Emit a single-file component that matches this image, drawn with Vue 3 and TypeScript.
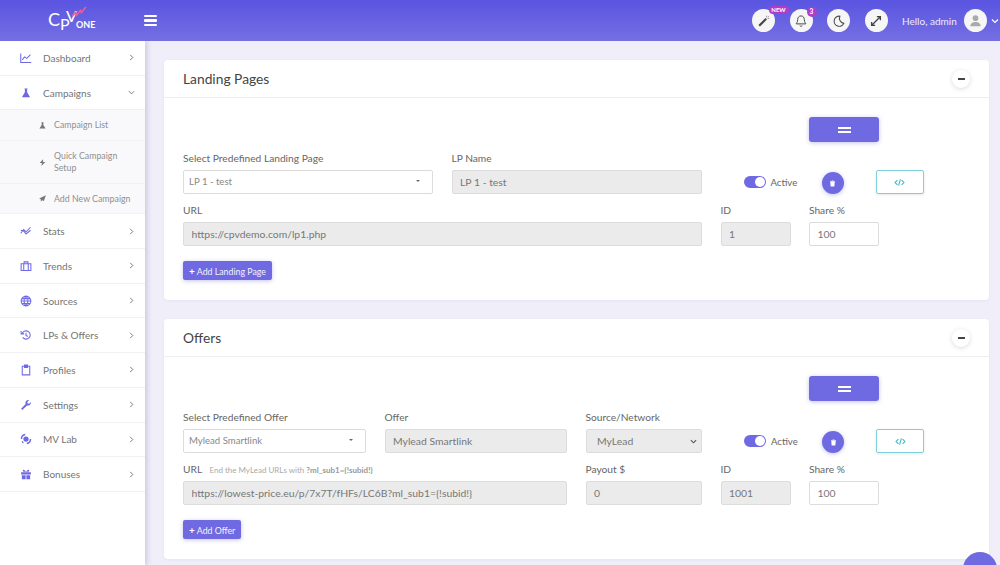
<script setup lang="ts">
interface NavItem {
  label: string;
  icon: string;
  solid?: boolean;
}

const topNav: NavItem[] = [{ label: 'Dashboard', icon: 'M1 2v12h14M3 10.500l3-4 3 2 5-5' }];

const lowerNav: NavItem[] = [
  { label: 'Stats', icon: 'M1 11l4-5 3 3 6-6M1 7l4 1 3 4 6-5' },
  { label: 'Trends', icon: 'M1.500 5h13v9h-13zM5 5v9M11 5v9M5.500 5V2.500h5V5' },
  { label: 'Sources', icon: 'M8 1.500a6.500 6.500 0 1 0 0 13 6.500 6.500 0 0 0 0-13zM1.500 8h13M8 1.500c-3.500 3.500-3.500 9.500 0 13M8 1.500c3.500 3.500 3.500 9.500 0 13M2.500 4.800h11M2.500 11.200h11' },
  { label: 'LPs & Offers', icon: 'M1.500 2.500v4h4M3 6a5.500 5.500 0 1 1 .5 5M8 5v3.500l2.500 1.500' },
  { label: 'Profiles', icon: 'M3 3h10v11.500H3zM6 1.500h4v3H6z' },
  { label: 'Settings', solid: true, icon: 'M1.500 13l6-6.500C6.500 4 8.500 1 12 1.500L9.800 4l.4 2 2 .4L14.500 4c.5 3.500-2.500 5.500-5 4.500L3 14.500z' },
  { label: 'MV Lab', solid: true, icon: 'M8 4.500a3.500 3.500 0 1 0 0 7 3.500 3.500 0 0 0 0-7zM1 8a7 7 0 0 1 6-7v2a5 5 0 0 0-4 5zM15 8a7 7 0 0 1-6 7v-2a5 5 0 0 0 4-5zM2 11.500l1.500-1 1.500 2L4 14z' },
  { label: 'Bonuses', solid: true, icon: 'M1.500 5.500h13v3h-13zM2.500 9.500h5V15h-5zM8.500 9.500h5V15h-5zM8 5C5 1 2.500 2 4.500 5zM8 5c3-4 5.500-3 3.500 0z' }
];
</script>

<template>
  <div class="page">
    <header class="topbar">
      <div class="logo">
        <span class="logo-letter logo-c">C</span>
        <span class="logo-letter logo-p">P</span>
        <span class="logo-letter logo-v">V</span>
        <svg class="logo-arrow" viewBox="0 0 16 12"><path d="M0 11l4-4 1 3 4-5 1 2 5-6" fill="none" stroke="#ec5c93" stroke-width="1.800" /></svg>
        <span class="logo-one">ONE</span>
      </div>
      <button class="burger" aria-label="Menu"><i></i><i></i><i></i></button>
      <div class="topbar-right">
        <span class="round-btn">
          <svg viewBox="0 0 16 16"><path d="M2.500 13.500l8-8" stroke="#444" stroke-width="2.400" fill="none" /><path d="M11 2v2M14 5h-2M13.500 2.500l-1 1" stroke="#888" stroke-width="1" fill="none" /></svg>
          <span class="badge badge-new">NEW</span>
        </span>
        <span class="round-btn">
          <svg viewBox="0 0 16 16"><path d="M8 2.200c-2.600 0-3.800 2-3.800 4.300 0 3-1.700 4.200-1.700 4.800h11c0-.6-1.700-1.800-1.700-4.800 0-2.300-1.200-4.300-3.800-4.300zM6.500 13.200c.4 1 2.600 1 3 0" fill="none" stroke="#444" stroke-width="1.100" /></svg>
          <span class="badge badge-count">3</span>
        </span>
        <span class="round-btn">
          <svg viewBox="0 0 16 16"><path d="M9 2.500a5.800 5.800 0 1 0 4.500 8.200A6 6 0 0 1 9 2.500z" fill="none" stroke="#444" stroke-width="1.200" /></svg>
        </span>
        <span class="round-btn">
          <svg viewBox="0 0 16 16"><path d="M3.500 12.500l9-9M9 3h4v4M3 9v4h4" fill="none" stroke="#444" stroke-width="1.500" /></svg>
        </span>
        <span class="hello">Hello, admin</span>
        <span class="round-btn avatar">
          <svg viewBox="0 0 16 16"><circle cx="8" cy="5.500" r="3" fill="#aaa" /><path d="M2.500 14c0-3 2.500-4.500 5.500-4.500s5.500 1.500 5.500 4.500z" fill="#aaa" /></svg>
        </span>
        <svg class="caret-down" viewBox="0 0 8 8"><path d="M1 2.500l3 3 3-3" fill="none" stroke="#fff" stroke-width="1.200" /></svg>
      </div>
    </header>

    <div class="main">
      <aside class="sidebar">
        <a v-for="item in topNav" :key="item.label" class="nav-item">
          <svg class="nav-icon" viewBox="0 0 16 16"><path :d="item.icon" /></svg>
          <span class="nav-label">{{ item.label }}</span>
          <svg class="chev" viewBox="0 0 8 8"><path d="M2.500 1l3 3-3 3" /></svg>
        </a>
        <a class="nav-item">
          <svg class="nav-icon solid" viewBox="0 0 16 16"><path d="M6 2h4v1H9.500v4l4 6.500H2.500l4-6.500V3H6z" /></svg>
          <span class="nav-label">Campaigns</span>
          <svg class="chev" viewBox="0 0 8 8"><path d="M1 2.500l3 3 3-3" /></svg>
        </a>
        <div class="subnav">
          <a class="sub-item h-31">
            <svg class="sub-icon" viewBox="0 0 16 16"><path d="M6 2h4v1H9.500v4l4 6.500H2.500l4-6.500V3H6z" /></svg>
            <span>Campaign List</span>
          </a>
          <a class="sub-item h-43">
            <svg class="sub-icon" viewBox="0 0 16 16"><path d="M9 2L3 9h4l-1 5 7-7H9z" /></svg>
            <span>Quick Campaign<br />Setup</span>
          </a>
          <a class="sub-item h-30">
            <svg class="sub-icon" viewBox="0 0 16 16"><path d="M14 2L2 8l3 1.500v4l2.500-2.500 3 1.500z" /></svg>
            <span>Add New Campaign</span>
          </a>
        </div>
        <a v-for="item in lowerNav" :key="item.label" class="nav-item">
          <svg class="nav-icon" :class="{ solid: item.solid }" viewBox="0 0 16 16"><path :d="item.icon" /></svg>
          <span class="nav-label">{{ item.label }}</span>
          <svg class="chev" viewBox="0 0 8 8"><path d="M2.500 1l3 3-3 3" /></svg>
        </a>
      </aside>

      <main class="content">
        <section class="card">
          <div class="card-head">
            <h2>Landing Pages</h2>
            <span class="collapse-btn"></span>
          </div>
          <div class="card-body">
            <div class="row drag-row">
              <button class="drag-btn" aria-label="Move"><i></i><i></i></button>
            </div>
            <div class="row">
              <label class="field w-250">
                <span class="lbl">Select Predefined Landing Page</span>
                <span class="fake-select">LP 1 - test<em></em></span>
              </label>
              <label class="field w-250">
                <span class="lbl">LP Name</span>
                <input class="input" value="LP 1 - test" readonly />
              </label>
              <div class="controls">
                <span class="toggle"></span>
                <span class="active-text">Active</span>
                <button class="trash" aria-label="Delete">
                  <svg viewBox="0 0 16 16"><path d="M4 5h8l-.7 8.500H4.700zM3.500 3.500h9v1h-9zM6.500 2.500h3v1h-3z" fill="#fff" /></svg>
                </button>
                <button class="code-btn" aria-label="Code">
                  <svg viewBox="0 0 16 16"><path d="M5 4.500L1.500 8 5 11.500M11 4.500L14.500 8 11 11.500M9.300 3.500L6.700 12.500" fill="none" stroke="#35b5cc" stroke-width="1.500" /></svg>
                </button>
              </div>
            </div>
            <div class="row">
              <label class="field w-519">
                <span class="lbl">URL</span>
                <input class="input" value="https://cpvdemo.com/lp1.php" readonly />
              </label>
              <label class="field w-70">
                <span class="lbl">ID</span>
                <input class="input" value="1" readonly />
              </label>
              <label class="field w-70">
                <span class="lbl">Share %</span>
                <input class="input editable" value="100" />
              </label>
            </div>
            <button class="add-btn"><b>+</b> Add Landing Page</button>
          </div>
        </section>

        <section class="card">
          <div class="card-head">
            <h2>Offers</h2>
            <span class="collapse-btn"></span>
          </div>
          <div class="card-body">
            <div class="row drag-row">
              <button class="drag-btn" aria-label="Move"><i></i><i></i></button>
            </div>
            <div class="row">
              <label class="field w-183">
                <span class="lbl">Select Predefined Offer</span>
                <span class="fake-select">Mylead Smartlink<em></em></span>
              </label>
              <label class="field w-182">
                <span class="lbl">Offer</span>
                <input class="input" value="Mylead Smartlink" readonly />
              </label>
              <label class="field w-116">
                <span class="lbl">Source/Network</span>
                <span class="select-wrap">
                  <select class="input native">
                    <option>MyLead</option>
                  </select>
                  <svg viewBox="0 0 8 8"><path d="M1 2.500l3 3 3-3" fill="none" stroke="#555" stroke-width="1.300" /></svg>
                </span>
              </label>
              <div class="controls">
                <span class="toggle"></span>
                <span class="active-text">Active</span>
                <button class="trash" aria-label="Delete">
                  <svg viewBox="0 0 16 16"><path d="M4 5h8l-.7 8.500H4.700zM3.500 3.500h9v1h-9zM6.500 2.500h3v1h-3z" fill="#fff" /></svg>
                </button>
                <button class="code-btn" aria-label="Code">
                  <svg viewBox="0 0 16 16"><path d="M5 4.500L1.500 8 5 11.500M11 4.500L14.500 8 11 11.500M9.300 3.500L6.700 12.500" fill="none" stroke="#35b5cc" stroke-width="1.500" /></svg>
                </button>
              </div>
            </div>
            <div class="row">
              <label class="field w-384">
                <span class="lbl">URL <small>End the MyLead URLs with <strong>?ml_sub1={!subid!}</strong></small></span>
                <input class="input" value="https://lowest-price.eu/p/7x7T/fHFs/LC6B?ml_sub1={!subid!}" readonly />
              </label>
              <label class="field w-116">
                <span class="lbl">Payout $</span>
                <input class="input" value="0" readonly />
              </label>
              <label class="field w-70">
                <span class="lbl">ID</span>
                <input class="input" value="1001" readonly />
              </label>
              <label class="field w-70">
                <span class="lbl">Share %</span>
                <input class="input editable" value="100" />
              </label>
            </div>
            <button class="add-btn"><b>+</b> Add Offer</button>
          </div>
        </section>
      </main>
    </div>

    <span class="fab"></span>
  </div>
</template>

<style scoped>
.page {
  position: relative;
  width: 1000px;
  height: 565px;
  overflow: hidden;
  background: #efeef9;
  font-family: Lato, "Open Sans", sans-serif;
  color: #666;
}

.topbar {
  position: relative;
  z-index: 2;
  height: 41px;
  display: flex;
  align-items: center;
  background: linear-gradient(180deg, #5a54e1, #7470e2);
}

.logo {
  position: relative;
  width: 144px;
  height: 41px;
  flex: none;
  color: #fff;
}

.logo-letter {
  position: absolute;
  font-size: 16px;
  line-height: 14px;
}

.logo-c {
  left: 48px;
  top: 12px;
  font-size: 18px;
}

.logo-p {
  left: 60px;
  top: 17px;
}

.logo-v {
  left: 66px;
  top: 9px;
}

.logo-arrow {
  position: absolute;
  left: 72px;
  top: 6px;
  width: 15px;
  height: 11px;
}

.logo-one {
  position: absolute;
  left: 76px;
  top: 20px;
  font-size: 9px;
  line-height: 10px;
  font-weight: 700;
}

.burger {
  width: 13px;
  padding: 0;
  border: 0;
  background: none;
  display: flex;
  flex-direction: column;
  gap: 2px;
}

.burger i {
  height: 2.400px;
  background: #fff;
  border-radius: 1px;
}

.topbar-right {
  margin-left: auto;
  display: flex;
  align-items: center;
  padding-right: 1px;
}

.round-btn {
  position: relative;
  width: 23px;
  height: 23px;
  margin-right: 14.500px;
  border-radius: 50%;
  background: #f6f6f6;
  display: flex;
  align-items: center;
  justify-content: center;
}

.round-btn svg {
  width: 14px;
  height: 14px;
}

.badge {
  position: absolute;
  color: #fff;
  background: #b23cc9;
  font-weight: 700;
  text-align: center;
}

.badge-new {
  top: -3.500px;
  left: 16.500px;
  width: 20px;
  height: 8px;
  border-radius: 4px;
  font-size: 6px;
  line-height: 8px;
}

.badge-count {
  top: -2.500px;
  left: 17px;
  width: 10px;
  height: 10px;
  border-radius: 50%;
  font-size: 6.500px;
  line-height: 10px;
}

.hello {
  width: 61.500px;
  font-size: 10px;
  color: #eeedfb;
  white-space: nowrap;
}

.avatar {
  margin-right: 4.500px;
}

.avatar svg {
  width: 15px;
  height: 15px;
}

.caret-down {
  width: 8px;
  height: 8px;
}

.main {
  display: flex;
  height: 524px;
}

.sidebar {
  width: 145px;
  flex: none;
  background: #fff;
  box-shadow: 2px 0 5px rgba(90, 85, 160, 0.25);
  z-index: 1;
}

.nav-item {
  height: 34.700px;
  box-sizing: border-box;
  display: flex;
  align-items: center;
  padding: 0 10px 0 20px;
  border-bottom: 1px solid #f1f1f4;
}

.nav-icon {
  width: 12px;
  height: 12px;
  flex: none;
  fill: none;
  stroke: #6e68e4;
  stroke-width: 1.400;
}

.nav-icon.solid {
  fill: #6e68e4;
  stroke: none;
}

.nav-label {
  margin-left: 11px;
  font-size: 10px;
  color: #757575;
  flex: 1;
  white-space: nowrap;
}

.chev {
  width: 7px;
  height: 7px;
  fill: none;
  stroke: #777;
  stroke-width: 1.100;
}

.subnav {
  background: #f9f9fc;
}

.sub-item {
  box-sizing: border-box;
  display: flex;
  align-items: center;
  padding-left: 38px;
  border-bottom: 1px solid #f1f1f4;
  font-size: 8.800px;
  line-height: 12px;
  color: #8f8f8f;
  white-space: nowrap;
}

.h-31 { height: 31px; }
.h-43 { height: 43px; }
.h-30 { height: 30px; }

.sub-icon {
  width: 9px;
  height: 9px;
  flex: none;
  margin-right: 7px;
  fill: #777;
}

.content {
  flex: 1;
  padding: 19px 11px 0 19px;
  min-width: 0;
}

.card {
  height: 240px;
  margin-bottom: 19px;
  background: #fff;
  border-radius: 4px;
  box-shadow: 0 1px 3px rgba(90, 85, 160, 0.06);
}

.card-head {
  height: 38px;
  box-sizing: border-box;
  padding: 0 19px;
  display: flex;
  align-items: center;
  justify-content: space-between;
  border-bottom: 1px solid #eeeef2;
}

.card-head h2 {
  margin: 0;
  font-size: 13.800px;
  font-weight: 400;
  color: #444;
}

.collapse-btn {
  width: 18px;
  height: 18px;
  border-radius: 50%;
  background: #fff;
  box-shadow: 0 1px 5px rgba(0, 0, 0, 0.15);
  display: flex;
  align-items: center;
  justify-content: center;
}

.collapse-btn::before {
  content: "";
  width: 7px;
  height: 2px;
  background: #444;
}

.card-body {
  padding: 19px 19px 0;
}

.row {
  display: flex;
  gap: 18.500px;
  align-items: flex-end;
  margin-bottom: 10px;
}

.drag-row {
  padding-left: 626px;
  margin-bottom: 10px;
}

.drag-btn {
  width: 70px;
  height: 25px;
  border: 0;
  padding: 0;
  border-radius: 3px;
  background: #6f6ae2;
  box-shadow: 0 1px 4px rgba(90, 85, 200, 0.35);
  display: flex;
  flex-direction: column;
  align-items: center;
  justify-content: center;
  gap: 2px;
}

.drag-btn i {
  width: 13px;
  height: 2px;
  background: #fff;
}

.field {
  display: flex;
  flex-direction: column;
  flex: none;
}

.w-70 { width: 70px; }
.w-116 { width: 116.500px; }
.w-182 { width: 182.500px; }
.w-183 { width: 183px; }
.w-250 { width: 250px; }
.w-384 { width: 384px; }
.w-519 { width: 519px; }

.lbl {
  height: 12px;
  font-size: 10.200px;
  line-height: 12px;
  margin-bottom: 6px;
  color: #666;
  white-space: nowrap;
}

.lbl small {
  margin-left: 5px;
  font-size: 8px;
  color: #aaa;
}

.lbl strong {
  color: #999;
}

.input {
  box-sizing: border-box;
  width: 100%;
  height: 24px;
  padding: 0 7.500px;
  border: 1px solid #dcdcdc;
  border-radius: 2px;
  background: #ebebeb;
  font: 10.400px Lato, "Open Sans", sans-serif;
  color: #777;
  outline: none;
}

.editable {
  background: #fff;
}

.select-wrap {
  position: relative;
  display: block;
  height: 24px;
}

.select-wrap svg {
  position: absolute;
  right: 5px;
  top: 9px;
  width: 7px;
  height: 7px;
}

.native {
  display: block;
  appearance: none;
  padding-left: 10.500px;
}

.fake-select {
  position: relative;
  box-sizing: border-box;
  height: 24px;
  padding: 0 5px;
  border: 1px solid #dcdcdc;
  border-radius: 2px;
  background: #fff;
  font-size: 9.600px;
  line-height: 22px;
  color: #888;
}

.fake-select em {
  position: absolute;
  right: 12px;
  top: 9px;
  border: 2.500px solid transparent;
  border-top-color: #666;
}

.controls {
  flex: none;
  height: 24px;
  display: flex;
  align-items: center;
  padding-left: 23.500px;
}

.toggle {
  position: relative;
  width: 22px;
  height: 12px;
  border-radius: 6px;
  background: #6f6ae2;
}

.toggle::after {
  content: "";
  position: absolute;
  right: 1px;
  top: 1px;
  width: 10px;
  height: 10px;
  border-radius: 50%;
  background: #fff;
}

.active-text {
  width: 51px;
  margin-left: 5px;
  font-size: 9.600px;
  color: #666;
}

.trash {
  width: 22px;
  height: 22px;
  padding: 0;
  border: 0;
  margin-top: 2px;
  border-radius: 50%;
  background: #6f6ae2;
  box-shadow: 0 1px 4px rgba(90, 85, 200, 0.35);
  display: flex;
  align-items: center;
  justify-content: center;
}

.trash svg {
  width: 9px;
  height: 9px;
}

.code-btn {
  width: 48px;
  height: 24px;
  margin-left: 32px;
  padding: 0;
  border: 1px solid #7fd0dd;
  border-radius: 2px;
  background: #fff;
  box-shadow: 0 1px 3px rgba(0, 0, 0, 0.1);
  display: flex;
  align-items: center;
  justify-content: center;
}

.code-btn svg {
  width: 11px;
  height: 11px;
}

.add-btn {
  height: 19px;
  margin-top: 5px;
  padding: 0 6px;
  border: 0;
  border-radius: 2px;
  background: #6f6ae2;
  box-shadow: 0 1px 4px rgba(90, 85, 200, 0.35);
  color: #f2f2ff;
  font: 8.800px Lato, "Open Sans", sans-serif;
}

.add-btn b {
  font-size: 10px;
  color: #fff;
}

.fab {
  position: absolute;
  left: 963px;
  top: 552px;
  width: 34px;
  height: 34px;
  border-radius: 50%;
  background: #6f6ae2;
}
</style>

<style>
html,
body {
  margin: 0;
  overflow: hidden;
}
</style>
